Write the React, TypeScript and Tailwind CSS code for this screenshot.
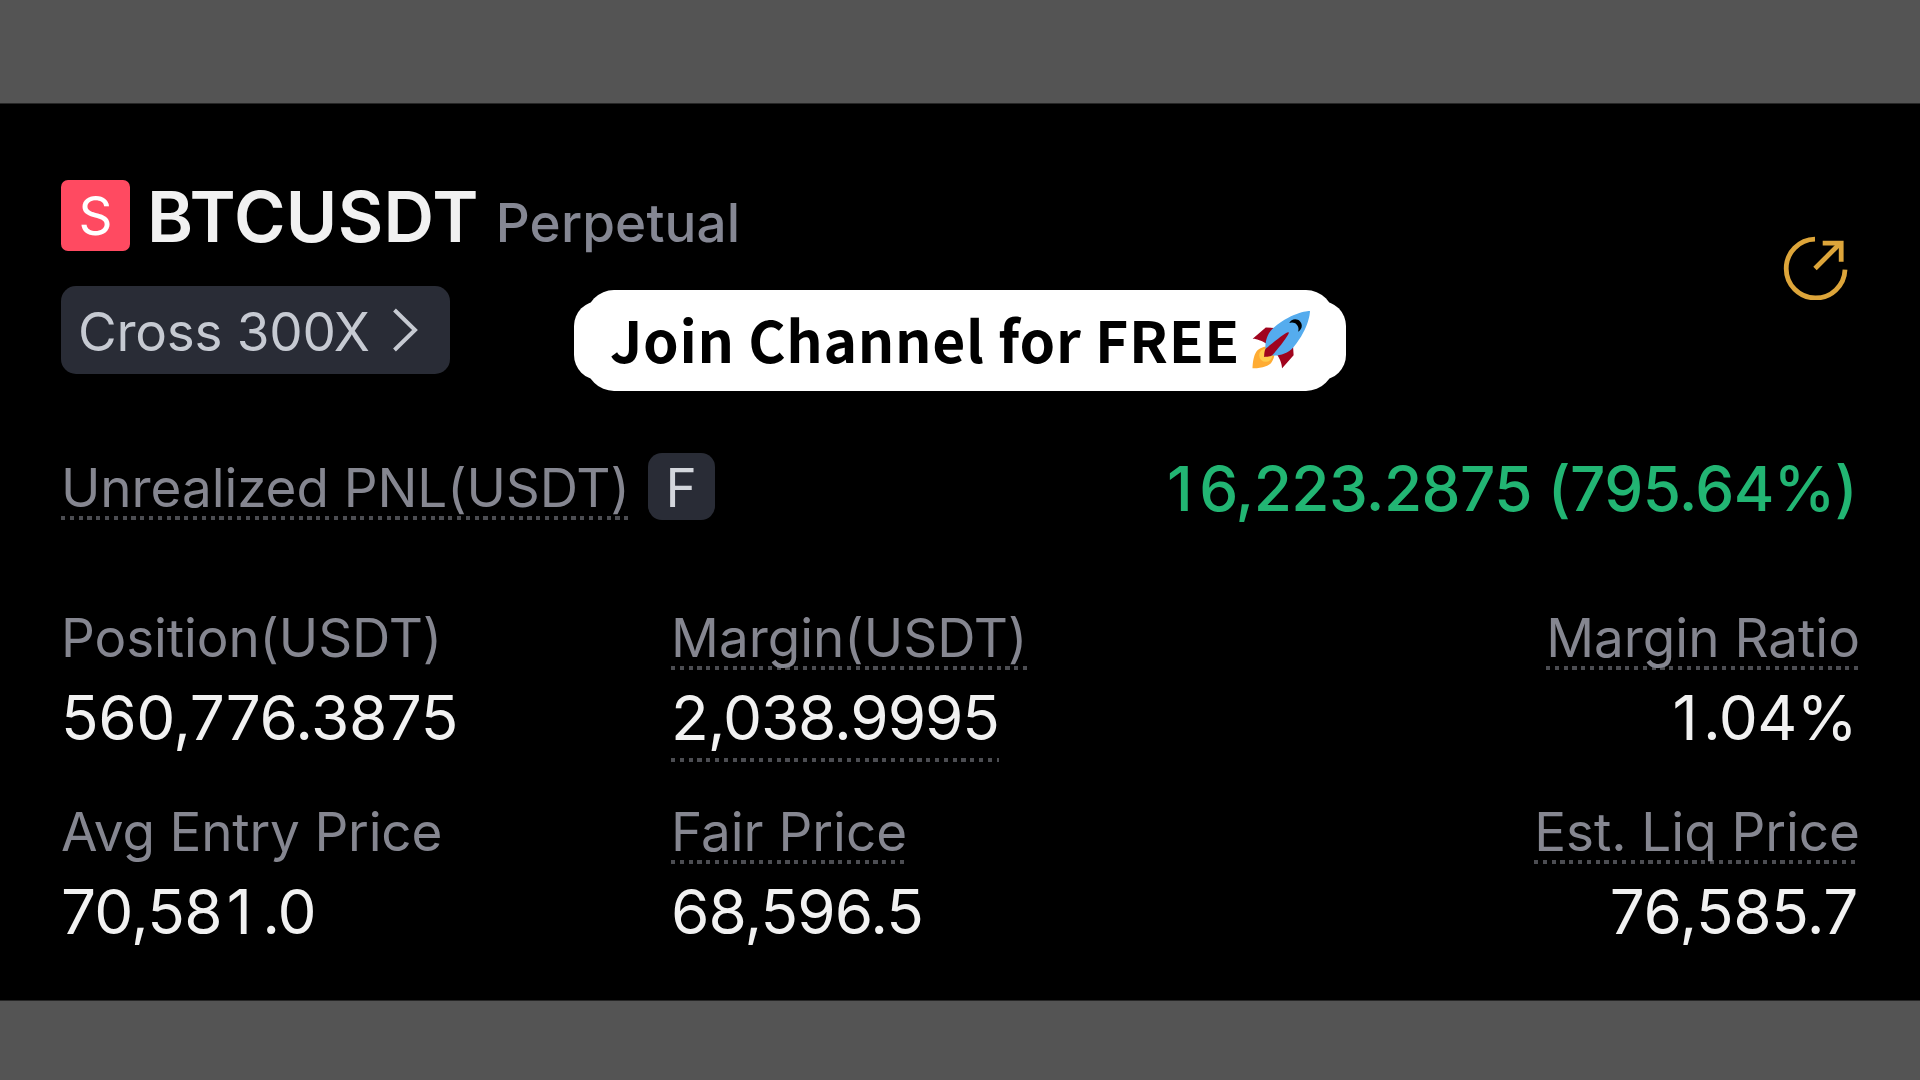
import type { ReactNode } from "react";

const TEXT = "font-['Inter',sans-serif]";

function DottedLine({ className = "" }: { className?: string }) {
  return (
    <div
      className={`h-1 w-full bg-[repeating-linear-gradient(90deg,#4c4d52_0_4.2px,transparent_4.2px_8.8px)] ${className}`}
    />
  );
}

function Label({ children, tracking = "", dotted = false }: { children: ReactNode; tracking?: string; dotted?: boolean }) {
  return (
    <div className="h-[75px] w-fit">
      <div className={`text-[53px] leading-[60px] whitespace-nowrap text-[#858690] ${tracking}`}>{children}</div>
      {dotted && <DottedLine className="-mt-[2px]" />}
    </div>
  );
}

function Value({ children, tracking, dotted = false }: { children: ReactNode; tracking: string; dotted?: boolean }) {
  return (
    <div className="w-fit">
      <div className={`text-[62px] leading-[70px] whitespace-nowrap text-[#f1f1f1] ${tracking}`}>{children}</div>
      {dotted && <DottedLine className="mt-[5px]" />}
    </div>
  );
}

function Stat({ children, end = false }: { children: ReactNode; end?: boolean }) {
  return <div className={end ? "flex h-[194px] flex-col items-end" : "flex h-[194px] flex-col items-start"}>{children}</div>;
}

function ShareIcon() {
  return (
    <svg viewBox="0 0 70 70" className="mt-[54px] mr-[10px] h-[70px] w-[70px]" fill="none" stroke="#dda53a" strokeWidth="4.8">
      <path d="M35 9.2A29.4 29.4 0 1 0 65 39.6" />
      <path d="M35 38.5 60.5 13" />
      <path d="M42.7 13.2H61.2V31.8" />
    </svg>
  );
}

function Rocket() {
  return (
    <svg viewBox="0 0 36 36" className="h-[59px] w-[59px]">
      <path fill="#A0041E" d="M1 17l8-7 16 1 1 16-7 8s.001-5.999-6-12-12-6-12-6z" />
      <path fill="#FFAC33" d="M.973 35s-.036-7.979 2.985-11S15 21.187 15 21.187 14.999 29 11.999 32c-3 3-11.026 3-11.026 3z" />
      <circle fill="#FFCC4D" cx="8.999" cy="27" r="4" />
      <path fill="#55ACEE" d="M35.999 0s-10 0-22 10c-6 5-6 14-4 16s11 2 16-4c10-12 10-22 10-22z" />
      <path d="M26.999 5c-1.623 0-3.013.971-3.641 2.36.502-.227 1.055-.36 1.641-.36 2.209 0 4 1.791 4 4 0 .586-.133 1.139-.359 1.64 1.389-.627 2.359-2.017 2.359-3.64 0-2.209-1.791-4-4-4z" />
      <path fill="#A0041E" d="M8 28s0-4 1-5 13.001-10.999 14-10-9.001 13-10.001 14S8 28 8 28z" />
    </svg>
  );
}

function Banner() {
  return (
    <div className="absolute top-[290px] left-[574px] flex h-[101px] w-[772px] items-center justify-center">
      <div className="absolute inset-x-0 inset-y-[11px] rounded-[25px] bg-white" />
      <div className="absolute inset-x-[12px] inset-y-0 rounded-[28px] bg-white" />
      <div className="relative flex w-full items-center pl-[36px]">
        <span className="w-[641px] pb-[5px] font-['Noto_Sans_CJK_SC','Noto_Sans',sans-serif] text-[57px] leading-[96px] font-bold tracking-[0.68px] whitespace-nowrap text-black">
          Join Channel for FREE
        </span>
        <Rocket />
      </div>
    </div>
  );
}

export default function App() {
  return (
    <div className={`relative flex h-[1080px] w-[1920px] flex-col overflow-hidden bg-[#545454] pt-[103px] ${TEXT}`}>
      <main className="h-[898px] border-y border-[#262626] bg-black pr-[60px] pl-[61px]">
        <header className="flex items-start justify-between pt-[72px]">
          <div>
            <div className="flex h-[80px] items-start">
              <div className="mt-[4px] flex h-[71px] w-[69px] items-center justify-center rounded-[7px] bg-[#ff4a61] text-[53px] leading-[70px] text-white">
                S
              </div>
              <div className="ml-[17px] flex items-baseline pt-px">
                <h1 className="text-[70px] leading-[80px] font-semibold tracking-[0.34px] text-[#f1f1f1]">BTCUSDT</h1>
                <span className="ml-[17px] text-[53px] leading-[60px] font-medium tracking-[0.15px] text-[#858793]">Perpetual</span>
              </div>
            </div>
            <button className="mt-[30px] flex h-[88px] w-[389px] items-center rounded-[15px] bg-[#292c36] pl-[17px] text-[#c6cad2]">
              <span className="pt-[3px] text-[53px] leading-[60px] tracking-[-0.27px]">Cross 300X</span>
              <svg viewBox="0 0 28 44" className="ml-[22px] h-[44px] w-[28px]" fill="none" stroke="currentColor" strokeWidth="4">
                <path d="M2.5 2 23 22 2.5 42" />
              </svg>
            </button>
          </div>
          <ShareIcon />
        </header>

        <section className="mt-[80px] flex h-[154px] items-start justify-between">
          <div className="flex items-start">
            <div className="mt-[4px]">
              <Label tracking="tracking-[-0.07px]" dotted>
                Unrealized PNL(USDT)
              </Label>
            </div>
            <div className="-mt-px ml-[18px] flex h-[67px] w-[67px] items-center justify-center rounded-[14px] bg-[#292c36] pt-[2px] text-[53px] leading-[60px] text-[#d3d6dc]">
              F
            </div>
          </div>
          <div className="pr-[3px] text-[62px] leading-[70px] font-medium tracking-[-0.62px] whitespace-nowrap text-[#22b573]">
            <span className="mr-[7px]">1</span>6,223.2875 (795.64%)
          </div>
        </section>

        <section className="grid grid-cols-[610px_500px_1fr]">
          <Stat>
            <Label tracking="tracking-[-0.1px]">Position(USDT)</Label>
            <Value tracking="tracking-[-0.45px]">560,776.3875</Value>
          </Stat>
          <Stat>
            <Label dotted>Margin(USDT)</Label>
            <Value tracking="tracking-[-1.1px]" dotted>
              2,038.9995
            </Value>
          </Stat>
          <Stat end>
            <Label dotted>Margin Ratio</Label>
            <Value tracking="tracking-[-0.6px]">
              <span className="mr-[6px]">1</span>.04<span className="mr-[3px]">%</span>
            </Value>
          </Stat>
          <Stat>
            <Label tracking="tracking-[-0.17px]">Avg Entry Price</Label>
            <Value tracking="tracking-[-0.8px]">
              70,58<span className="mr-[11px] ml-[5px]">1</span>.0
            </Value>
          </Stat>
          <Stat>
            <Label dotted>Fair Price</Label>
            <Value tracking="tracking-[-0.95px]">68,596.5</Value>
          </Stat>
          <Stat end>
            <Label tracking="tracking-[-0.02px]" dotted>
              Est. Liq Price
            </Label>
            <Value tracking="tracking-[-0.43px]">
              76,585.<span className="mr-[2px]">7</span>
            </Value>
          </Stat>
        </section>
      </main>
      <Banner />
    </div>
  );
}
